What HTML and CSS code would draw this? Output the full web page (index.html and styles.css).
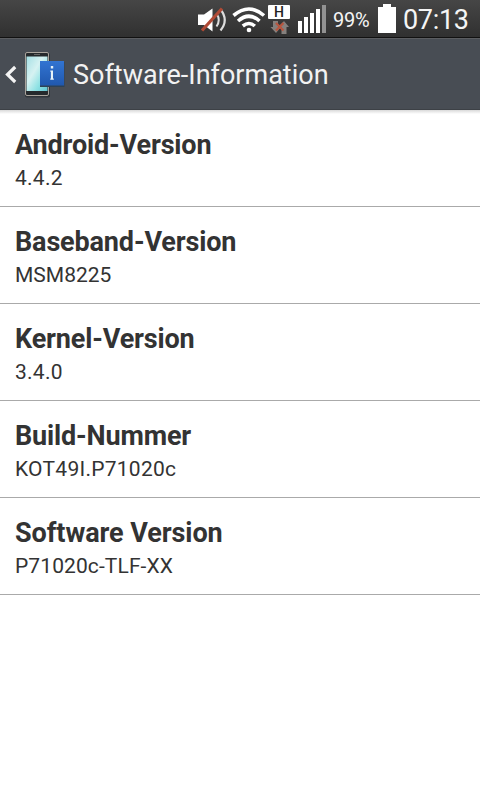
FILE: index.html
```html
<!DOCTYPE html>
<html lang="de">
<head>
    <meta charset="UTF-8">
    <meta name="viewport" content="width=device-width, initial-scale=1.0">
    <title>Software-Information</title>
    <link rel="stylesheet" href="styles.css">
</head>
<body>
    <div class="status-bar">
        <svg class="status-icons" width="138" height="38" viewBox="190 0 138 38">
            <!-- muted speaker -->
            <path d="M198 14.500h6l8.500-6v23l-8.500-6.500h-6z" fill="#fff"/>
            <path d="M216.500 13.500q4.500 6.500 0 13" fill="none" stroke="#ddd" stroke-width="2"/>
            <path d="M220.500 9.500q8.500 10.500 0 21" fill="none" stroke="#ddd" stroke-width="2.200"/>
            <path d="M202 30.500L222 8.500" stroke="#b04a35" stroke-width="3.200"/>
            <!-- wifi -->
            <path d="M233.500 15.500q15.500-13 30.500 0M238 21q11-9.500 21.500 0M242.800 26q6.200-5 12 0" fill="none" stroke="#fff" stroke-width="3.600"/>
            <circle cx="249" cy="30" r="2.300" fill="#fff"/>
            <!-- mobile data -->
            <rect x="268" y="5" width="22" height="14" rx="1" fill="#fff"/>
            <path d="M273 21h5v6h3l-5 6-5.500-6h2.500z" fill="#85807d"/>
            <path d="M284 21l5 6h-2.500v7h-5v-7h-3z" fill="#85807d"/>
            <path d="M276 23l7.500 7.500M283.500 23l-7.500 7.500" stroke="#b8563f" stroke-width="2.300"/>
            <text class="network" x="279" y="17" text-anchor="middle">H</text>
            <!-- signal -->
            <path d="M298 21h4v12h-4zM304 17h4v16h-4zM310 13h4v20h-4zM316 9h4v24h-4z" fill="#fff"/>
            <path d="M322 5h4v28h-4z" fill="#929292"/>
        </svg>
        <span class="percent">99%</span>
        <svg class="battery" width="18" height="38" viewBox="0 0 18 38">
            <path d="M0 7h5v-3h8v3h5v26h-18z" fill="#fff"/>
        </svg>
        <span class="clock">07:13</span>
    </div>

    <header class="header">
        <svg class="header-icon" width="66" height="72" viewBox="0 38 66 72">
            <defs>
                <linearGradient id="screen" x1="0" y1="0" x2="1" y2="1">
                    <stop offset="0" stop-color="#a5dfe4"/>
                    <stop offset="0.400" stop-color="#d6f2f2"/>
                    <stop offset="0.700" stop-color="#8fe2e4"/>
                    <stop offset="1" stop-color="#62c5d2"/>
                </linearGradient>
                <linearGradient id="info" x1="0" y1="0" x2="0" y2="1">
                    <stop offset="0" stop-color="#3274d2"/>
                    <stop offset="1" stop-color="#2058ae"/>
                </linearGradient>
            </defs>
            <path d="M15.200 67L7.500 74.500l7.700 7.500" fill="none" stroke="#f4f4f4" stroke-width="3.200"/>
            <rect x="25" y="53" width="25" height="44.500" rx="2" fill="#30353a"/>
            <rect x="25.500" y="52.500" width="23" height="43" rx="1.500" fill="#25292c" stroke="#a9a39c"/>
            <rect x="26.500" y="56.500" width="21" height="34.500" fill="url(#screen)"/>
            <path d="M34 54.500h6" stroke="#666" stroke-width="1"/>
            <rect x="40" y="62" width="24.500" height="25" fill="#2e4256"/>
            <rect x="40" y="61" width="24" height="24.500" fill="url(#info)"/>
            <path d="M50.800 66h2.400v2.500h-2.400zM50.300 70.500h2.700v8h.8v1.200h-3.500v-1.200h.6v-6.800h-.6z" fill="#e8f3f8"/>
        </svg>
        <h1>Software-Information</h1>
    </header>

    <ul class="info-list">
        <li>
            <h2>Android-Version</h2>
            <p class="release">4.4.2</p>
        </li>
        <li>
            <h2>Baseband-Version</h2>
            <p>MSM8225</p>
        </li>
        <li>
            <h2>Kernel-Version</h2>
            <p class="release">3.4.0</p>
        </li>
        <li>
            <h2>Build-Nummer</h2>
            <p class="build">KOT49I.P71020c</p>
        </li>
        <li>
            <h2 class="software-title">Software Version</h2>
            <p class="software">P71020c-TLF-XX</p>
        </li>
    </ul>
</body>
</html>
```
FILE: styles.css
```css
* {
    margin: 0;
    padding: 0;
    box-sizing: border-box;
}

body {
    font-family: Roboto, sans-serif;
    color: #333;
    background: #fff;
}

.status-bar {
    display: flex;
    align-items: center;
    height: 38px;
    padding-left: 190px;
    color: #f5f5f5;
    background: linear-gradient(#464646, #303030);
    border-bottom: 1px solid #111;
}

.status-icons, .battery {
    display: block;
    flex: none;
    height: 38px;
}

.network {
    font-size: 14px;
    font-weight: 500;
    fill: #222;
}

.percent {
    width: 45px;
    padding-top: 3px;
    margin-left: 5px;
    font-size: 20px;
    letter-spacing: -0.3px;
    line-height: 38px;
}

.clock {
    padding-top: 3px;
    margin-left: 7px;
    font-size: 27px;
    letter-spacing: -0.3px;
    line-height: 38px;
}

.header {
    display: flex;
    align-items: center;
    height: 72px;
    background: #484d54;
    border-top: 1px solid #5b5d61;
    border-bottom: 1px solid #3d4146;
}

.header-icon {
    flex: none;
}

.header h1 {
    padding-top: 2px;
    margin-left: 7px;
    color: #f2f2f2;
    font-size: 27px;
    font-weight: 400;
    line-height: 36px;
    white-space: nowrap;
}

.info-list {
    list-style: none;
    background: linear-gradient(#d9d9d9, #fff 4px);
}

.info-list li {
    height: 97px;
    padding: 19px 15px 0;
    border-bottom: 1px solid #aaa;
}

.info-list h2 {
    font-size: 27px;
    font-weight: 700;
    letter-spacing: -0.15px;
    line-height: 32px;
}

.info-list .software-title {
    letter-spacing: -0.07px;
}

.info-list p {
    margin-top: 3px;
    font-size: 21px;
    line-height: 28px;
}

.info-list .release {
    letter-spacing: 0.25px;
}

.info-list .build {
    letter-spacing: 0.26px;
}

.info-list .software {
    letter-spacing: 0.1px;
}
```
